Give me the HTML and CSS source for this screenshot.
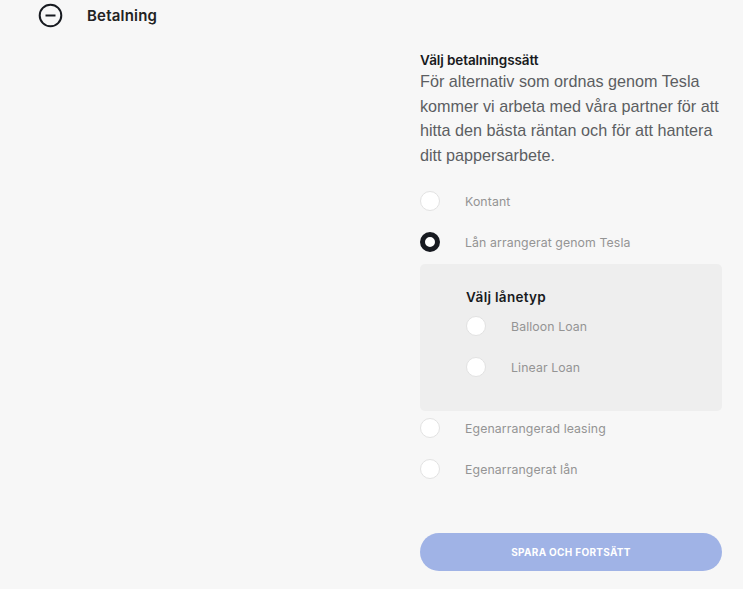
FILE: index.html
```html
<!DOCTYPE html>
<html lang="sv">
<head>
<meta charset="utf-8">
<link rel="stylesheet" href="styles.css">
</head>
<body>
<div class="page">
  <div class="section-head">
    <svg class="toggle" width="25" height="25" viewBox="0 0 25 25"><circle cx="12.5" cy="12.5" r="10.8" fill="none" stroke="#171a20" stroke-width="2"/><line x1="7.5" y1="12.5" x2="17.5" y2="12.5" stroke="#171a20" stroke-width="2"/></svg>
    <span class="section-title">Betalning</span>
  </div>
  <div class="content">
    <div class="form">
      <h3 class="label">Välj betalningssätt</h3>
      <p class="desc">För alternativ som ordnas genom Tesla kommer vi arbeta med våra partner för att hitta den bästa räntan och för att hantera ditt pappersarbete.</p>
      <div class="options">
        <div class="opt"><span class="radio"></span><span class="opt-text">Kontant</span></div>
        <div class="opt"><span class="radio checked"></span><span class="opt-text">Lån arrangerat genom Tesla</span></div>
        <div class="panel">
          <h3 class="label">Välj lånetyp</h3>
          <div class="opt"><span class="radio"></span><span class="opt-text">Balloon Loan</span></div>
          <div class="opt"><span class="radio"></span><span class="opt-text">Linear Loan</span></div>
        </div>
        <div class="opt"><span class="radio"></span><span class="opt-text">Egenarrangerad leasing</span></div>
        <div class="opt"><span class="radio"></span><span class="opt-text">Egenarrangerat lån</span></div>
      </div>
      <button class="btn">SPARA OCH FORTSÄTT</button>
    </div>
  </div>
</div>
</body>
</html>
```
FILE: styles.css
```css
html, body { margin: 0; padding: 0; }
body {
  background: #f7f7f7;
  font-family: "Inter", "Liberation Sans", sans-serif;
  color: #171a20;
  width: 743px;
  height: 589px;
  overflow: hidden;
}
.section-head {
  display: flex;
  align-items: center;
  height: 30px;
  padding-left: 38px;
}
.toggle { display: block; }
.section-title {
  margin-left: 24px;
  font-size: 15px;
  font-weight: 600;
  color: #222;
  letter-spacing: 0.2px;
}
.content {
  padding-left: 420px;
  padding-top: 21px;
  width: 302px;
}
.label {
  margin: 0;
  font-size: 13.5px;
  font-weight: 600;
  line-height: 18px;
  color: #171a20;
  letter-spacing: -0.1px;
}
.panel .label { letter-spacing: 0.3px; }
.desc {
  margin: 0 -10px 0 0;
  font-family: "Liberation Sans", Arial, sans-serif;
  font-size: 16.2px;
  line-height: 24.7px;
  color: #5c5e62;
}
.options {
  margin-top: 13px;
  display: flex;
  flex-direction: column;
}
.opt {
  display: flex;
  align-items: center;
  height: 41px;
}
.radio {
  width: 18px;
  height: 18px;
  border-radius: 50%;
  background: #fff;
  border: 1px solid #e2e2e2;
  flex: none;
}
.radio.checked {
  width: 10px;
  height: 10px;
  border: 5px solid #171a20;
}
.opt-text {
  margin-left: 25px;
  font-size: 12.3px;
  color: #949494;
  font-weight: 400;
  letter-spacing: 0.1px;
}
.panel {
  background: #eeeeee;
  border-radius: 5px;
  padding: 24px 46px 23px;
  margin: 1px 0 -3px;
}
.btn {
  display: block;
  margin-top: 43px;
  width: 302px;
  height: 38px;
  border: none;
  border-radius: 19px;
  background: #a0b3e6;
  color: #fff;
  font-family: "Inter", sans-serif;
  font-weight: 700;
  font-size: 10px;
  letter-spacing: 0.3px;
}
```
